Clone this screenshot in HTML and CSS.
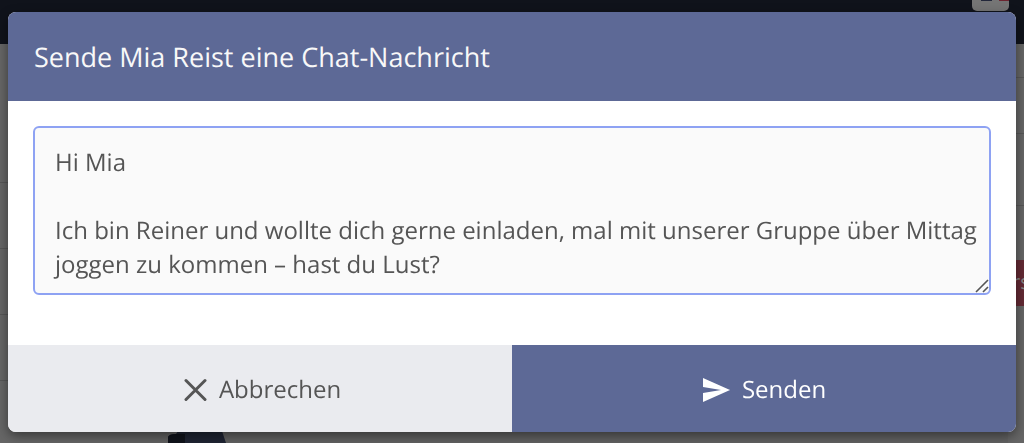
FILE: index.html
```html
<!DOCTYPE html>
<html lang="de">
<head>
  <meta charset="UTF-8">
  <meta name="viewport" content="width=device-width, initial-scale=1.0">
  <title>Chat-Nachricht</title>
  <link rel="stylesheet" href="styles.css">
</head>
<body>
  <!-- Abgedunkelte Seite im Hintergrund -->
  <div class="page">
    <div class="topbar">
      <span class="avatar"><span class="avatar-hair"></span><span class="avatar-badge"></span></span>
    </div>
    <div class="columns">
      <div class="side side-left">
        <div class="row row-first"></div>
        <div class="row"></div>
        <div class="row"></div>
        <div class="row"></div>
      </div>
      <div class="content">
        <svg class="figure" width="60" height="12" viewBox="0 0 60 12" aria-hidden="true">
          <path d="M10 0H54L58 12H0V6Q1 3 8 3Z" fill="#1f2433"/>
          <path d="M0 12V6Q1 3 8 3H17V12Z" fill="#10131b"/>
        </svg>
      </div>
      <div class="side side-right">
        <div class="panel panel-small"></div>
        <div class="panel"></div>
        <div class="panel panel-large"></div>
        <div class="tag">rs</div>
      </div>
    </div>
  </div>

  <!-- Dialog -->
  <div class="overlay">
    <form class="modal" role="dialog" aria-labelledby="modal-title">
      <h2 class="modal-header" id="modal-title">
        <label for="nachricht">Sende Mia Reist eine Chat-Nachricht</label>
      </h2>
      <div class="modal-body">
        <div class="field">
          <textarea class="message" id="nachricht" rows="4">Hi Mia

Ich bin Reiner und wollte dich gerne einladen, mal mit unserer Gruppe über Mittag joggen zu kommen – hast du Lust?</textarea>
          <svg class="grip" width="14" height="14" viewBox="0 0 14 14" aria-hidden="true">
            <path d="M1 13L13 1M8 13L13 8" fill="none" stroke="#555" stroke-width="1.6"/>
          </svg>
        </div>
      </div>
      <div class="modal-footer">
        <button type="button" class="btn btn-cancel">
          <svg width="28" height="24" viewBox="0 0 28 24" aria-hidden="true">
            <path d="M7 2.5L26 21.5M26 2.5L7 21.5" fill="none" stroke="currentColor" stroke-width="3" stroke-linecap="round"/>
          </svg>
          Abbrechen
        </button>
        <button type="button" class="btn btn-send">
          <svg width="28" height="24" viewBox="0 0 28 24" aria-hidden="true">
            <path d="M1 0L28 12L1 24V15L19 12L1 9Z" fill="currentColor"/>
          </svg>
          Senden
        </button>
      </div>
    </form>
  </div>
</body>
</html>
```
FILE: styles.css
```css
* {
  box-sizing: border-box;
}

body {
  margin: 0;
  font-family: "Open Sans", sans-serif;
  text-rendering: geometricPrecision;
  background-color: #666;
  overflow: hidden;
}

/* Seite im Hintergrund */
.page {
  display: flex;
  flex-direction: column;
  height: 100vh;
}

.topbar {
  display: flex;
  justify-content: flex-end;
  align-items: flex-start;
  height: 44px;
  padding-right: 15px;
  background-color: #10131b;
}

.avatar {
  display: flex;
  justify-content: flex-end;
  gap: 7px;
  width: 37px;
  height: 11px;
  border-radius: 0 0 5px 5px;
  background-color: #757575;
}

.avatar-hair {
  width: 11px;
  height: 1px;
  background-color: #22273a;
}

.avatar-badge {
  width: 10px;
  height: 1px;
  background-color: #6b2530;
}

.columns {
  display: flex;
  flex: 1;
}

.side-left {
  width: 130px;
}

.row {
  height: 66px;
  border-bottom: 1px solid #575757;
}

.row-first {
  height: 139px;
}

.content {
  display: flex;
  flex: 1;
  align-items: flex-end;
  padding-left: 38px;
  background-color: #626262;
}

.figure {
  display: block;
}

.side-right {
  width: 16px;
}

.panel {
  height: 56px;
  border-bottom: 1px solid #575757;
}

.panel-small {
  height: 34px;
}

.panel-large {
  height: 72px;
  margin-bottom: 54px;
}

.tag {
  height: 46px;
  padding-left: 4px;
  line-height: 44px;
  font-size: 20px;
  color: #868686;
  background-color: #632a34;
  overflow: hidden;
}

/* Dialog */
.overlay {
  position: fixed;
  inset: 0;
  padding: 12px 8px;
}

.modal {
  border-radius: 8px;
  background-color: #fff;
  box-shadow: 0 4px 12px rgba(0, 0, 0, 0.45);
  overflow: hidden;
}

.modal-header {
  margin: 0;
  padding: 26px;
  font-size: 27px;
  font-weight: 400;
  line-height: 37px;
  color: #f8f8f8;
  background-color: #5d6996;
}

.modal-body {
  padding: 25px 25px 50px;
}

.field {
  position: relative;
}

.message {
  display: block;
  width: 100%;
  padding: 18px 8px 11px 20px;
  border: 2px solid #8ea2f3;
  border-radius: 6px;
  outline: none;
  resize: none;
  overflow: hidden;
  font-family: inherit;
  font-size: 24px;
  line-height: 34px;
  text-rendering: inherit;
  color: #555;
  background-color: #fafafa;
}

.grip {
  position: absolute;
  right: 2px;
  bottom: 2px;
}

.modal-footer {
  display: grid;
  grid-template-columns: 1fr 1fr;
}

.btn {
  display: flex;
  justify-content: center;
  align-items: center;
  gap: 12px;
  padding: 27px 26px 25px;
  border: none;
  font-family: inherit;
  font-size: 24px;
  line-height: 35px;
  text-rendering: inherit;
  cursor: pointer;
}

.btn-cancel {
  color: #555;
  background-color: #eaebef;
}

.btn-send {
  color: #fff;
  background-color: #5d6996;
}
```
